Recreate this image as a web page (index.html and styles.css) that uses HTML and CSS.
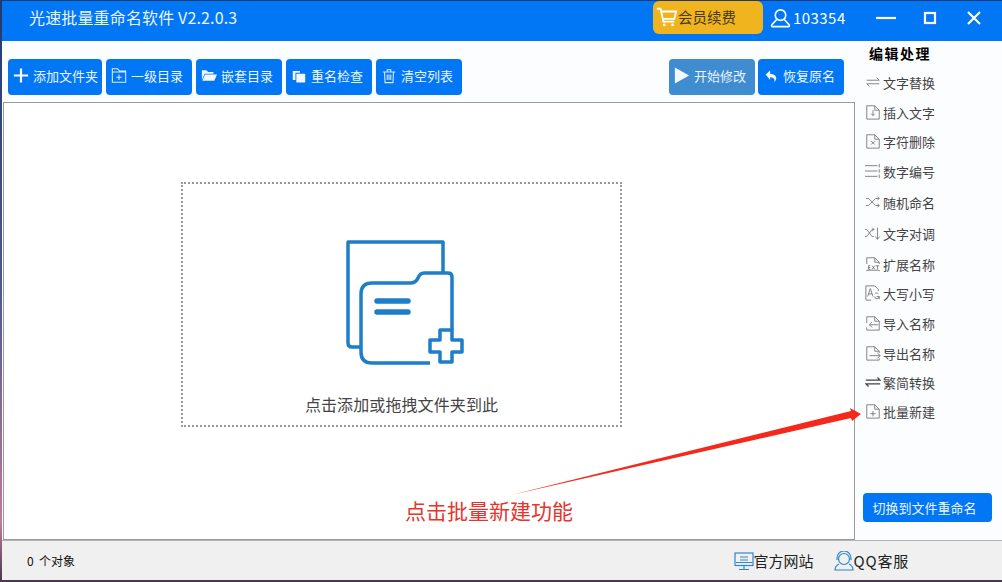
FILE: index.html
```html
<!DOCTYPE html>
<html lang="zh-CN">
  <head>
    <meta charset="UTF-8" />
    <meta name="viewport" content="width=device-width, initial-scale=1.0" />
    <title>光速批量重命名软件</title>
    <link rel="stylesheet" href="styles.css">
  </head>
  <body>
    <div class="window">
      <header class="titlebar">
        <div class="app-title">光速批量重命名软件 V2.2.0.3</div>
        <div class="vip">
          <svg class="vip-icon" viewBox="0 0 24 24"><path d="M1 3h4l3 14h12M5.500 6H22l-2 8H7.500"/><circle cx="9" cy="20.500" r="1.500"/><circle cx="18" cy="20.500" r="1.500"/></svg>
          <span>会员续费</span>
        </div>
        <div class="user">
          <svg class="user-icon" viewBox="0 0 22 20"><circle cx="11" cy="7" r="5.500"/><path d="M7 11.500 2 17q-1 2 1 2h16q2 0 1-2l-5-5.500"/></svg>
          <span>103354</span>
        </div>
        <div class="win-btns">
          <svg class="win-btn" viewBox="0 0 44 20"><path d="M12 10h20"/></svg>
          <svg class="win-btn" viewBox="0 0 44 20"><rect x="17" y="5" width="10" height="10"/></svg>
          <svg class="win-btn" viewBox="0 0 44 20"><path d="M16 4l12 12M28 4 16 16"/></svg>
        </div>
      </header>

      <div class="content">
        <main class="main">
          <div class="toolbar">
            <div class="tool tool-first">
              <svg class="tool-icon" viewBox="0 0 18 18"><path class="thick" d="M9 1v16M1 9h16"/></svg>
              添加文件夹
            </div>
            <div class="tool">
              <svg class="tool-icon" viewBox="0 0 18 18"><path class="thin" d="M1.500 16.500V1.500h6l2 2.500h7v12.500zM1.500 5h15M9 8v6M6 11h6"/></svg>
              一级目录
            </div>
            <div class="tool">
              <svg class="tool-icon" viewBox="0 0 18 18"><path class="solid" d="M1 3h5l2 2h6v2H4L1 14zM4.500 8H18l-3 7H1.500z"/></svg>
              嵌套目录
            </div>
            <div class="tool">
              <svg class="tool-icon" viewBox="0 0 18 18"><path class="solid" d="M2 4h8v2H5v8H2z"/><rect class="solid" x="6" y="7" width="10" height="10" rx="1"/></svg>
              重名检查
            </div>
            <div class="tool">
              <svg class="tool-icon" viewBox="0 0 18 18"><path class="thin" d="M2 5h14M7 5V2.500h4V5M4 5l.5 12h9L14 5M7 8v6M9 8v6M11 8v6"/></svg>
              清空列表
            </div>
            <div class="tool tool-start">
              <svg class="tool-icon" viewBox="0 0 18 18"><path class="solid" d="M1 0l16 9L1 18z"/></svg>
              开始修改
            </div>
            <div class="tool">
              <svg class="tool-icon" viewBox="0 0 18 18"><path class="solid" d="M3 8l5-4.500v3.500q7 .5 7 5.500 0 2-2.500 4 .5-1.500.5-2.500 0-2.500-5-3v3z"/></svg>
              恢复原名
            </div>
          </div>

          <div class="list-box">
            <div class="dropzone">
              <svg class="drop-icon" viewBox="0 0 145 140">
                <path d="M31 117H22q-4 0-4-4V12H113V43"/>
                <path d="M100 133H42q-11 0-11-11V64q0-11 11-11H80q6 0 8-5t6-5h24q4 0 4 4V100"/>
                <path class="bars" d="M47 71H78M47 82H78"/>
                <path d="M110 100h12v10h10v12h-10v10h-12v-10h-10v-12h10z"/>
              </svg>
              <p class="drop-text">点击添加或拖拽文件夹到此</p>
            </div>
            <p class="hint">点击批量新建功能</p>
          </div>
        </main>

        <aside class="side">
          <h2 class="side-title">编辑处理</h2>
          <ul class="side-list">
            <li class="side-item"><svg class="side-icon" viewBox="0 0 18 18"><path d="M2 7h14l-3-3M16 11H2l3 3"/></svg>文字替换</li>
            <li class="side-item"><svg class="side-icon" viewBox="0 0 18 18"><path d="M2 2h9l5 5v10H2zM11 2v5h5M9 7v6M7 11l2 2 2-2"/></svg>插入文字</li>
            <li class="side-item up"><svg class="side-icon" viewBox="0 0 18 18"><path d="M2 2h9l5 5v10H2zM11 2v5h5M7 9l4 4M11 9l-4 4"/></svg>字符删除</li>
            <li class="side-item"><svg class="side-icon" viewBox="0 0 18 18"><path d="M0 3h14M0 9h14M0 15h14M16 1v4M16 7v4M16 13v4"/></svg>数字编号</li>
            <li class="side-item down"><svg class="side-icon" viewBox="0 0 18 18"><path d="M1 5h3l8 8h4M1 13h3l8-8h4M14 3l2 2-2 2M14 11l2 2-2 2"/></svg>随机命名</li>
            <li class="side-item down"><svg class="side-icon" viewBox="0 0 18 18"><path d="M0 5h2l6 8h2M0 13h2l6-8h2M8 3l2 2-2 2M14 3v13M11.500 13l2.500 3 2.500-3"/></svg>文字对调</li>
            <li class="side-item down"><svg class="side-icon" viewBox="0 0 18 18"><path d="M2 9V2h9l5 5v2M11 2v5h5M2 17v-1h14v1M4 11h2M4 11v4h2M4 13h2M8 11l3 4M11 11l-3 4M12 11h4M14 11v4"/></svg>扩展名称</li>
            <li class="side-item up"><svg class="side-icon" viewBox="0 0 18 18"><path d="M1 1h10l4 4v2M1 1v16h6M3 13l3-9 3 9M4 10h4M15 10a2.500 2.500 0 0 0-4 0M11 13a2.500 2.500 0 1 0 5 0v3M16 13h-3"/></svg>大写小写</li>
            <li class="side-item"><svg class="side-icon" viewBox="0 0 18 18"><path d="M2 9V2h9l5 5v10H2v-3M11 2v5h5M15 11H5l3-3M5 11l3 3"/></svg>导入名称</li>
            <li class="side-item"><svg class="side-icon" viewBox="0 0 18 18"><path d="M16 9V7l-5-5H2v15h14v-2M11 2v5h5M5 12h12l-3-3M17 12l-3 3"/></svg>导出名称</li>
            <li class="side-item up"><svg class="side-icon dark" viewBox="0 0 18 18"><path d="M1 7h16l-3-3M17 11H1l3 3"/></svg>繁简转换</li>
            <li class="side-item up"><svg class="side-icon" viewBox="0 0 18 18"><path d="M2 17V2h9l5 5v10zM11 2v5h5M9 9v6M6 12h6"/></svg>批量新建</li>
          </ul>
          <div class="switch-btn">切换到文件重命名</div>
        </aside>
      </div>

      <footer class="statusbar">
        <span class="count">0  个对象</span>
        <div class="links">
          <span class="link">
            <svg class="link-icon" viewBox="0 0 20 20"><rect x="1" y="2" width="18" height="12.500"/><path d="M6 6h8M6 9h8M2 11.500h16M10 15v3M5 18.500h10"/></svg>
            官方网站
          </span>
          <span class="link link-qq">
            <svg class="link-icon" viewBox="0 0 20 20"><circle cx="10" cy="8" r="5.500"/><path d="M3 9V7a7 7 0 0 1 14 0v2M5 13q-4 2-4 6h18q0-4-4-6"/></svg>
            QQ客服
          </span>
        </div>
      </footer>
    </div>

    <!-- 红色箭头,压在列表和侧栏上面 -->
    <svg class="arrow" viewBox="0 0 1002 582"><polygon points="511,495 851,411 850,408 861,414 852,421 851,418"/></svg>
  </body>
</html>
```

FILE: styles.css
```css
* {
  padding: 0;
  margin: 0;
  box-sizing: border-box;
  font-family: "Noto Sans CJK SC", "Noto Sans", sans-serif;
}

html,
body {
  width: 1002px;
  height: 582px;
  overflow: hidden;
}

body {
  position: relative;
  background: linear-gradient(#1f3a70 0%, #4a5a8e 50%, #c07a9a 90%, #4a3550 100%);
}

.window {
  display: flex;
  flex-direction: column;
  height: 579px;
  margin: 1px 0 0 2px;
  background-color: #fcfdff;
}

/* barra de titulo */
.titlebar {
  display: flex;
  align-items: center;
  height: 40px;
  flex-shrink: 0;
  background-color: #0277f6;
  color: white;
}

.app-title {
  flex-shrink: 0;
  width: 651px;
  padding: 0 0 9px 27px;
  font-size: 16px;
  line-height: 24px;
  letter-spacing: 0.150px;
  color: #eaf4ff;
}

.vip {
  display: flex;
  align-items: center;
  flex-shrink: 0;
  width: 110px;
  height: 33px;
  margin-top: -7px;
  padding-bottom: 2px;
  border-radius: 6px;
  background-color: #f0b41e;
  color: #4a3a10;
  font-size: 14.500px;
}

.vip-icon {
  width: 22px;
  height: 24px;
  margin-left: 3px;
  fill: none;
  stroke: white;
  stroke-width: 2;
}

.vip-icon circle {
  fill: white;
  stroke: none;
}

.user {
  display: flex;
  align-items: center;
  flex-shrink: 0;
  width: 94px;
  margin: -7px 0 0 7px;
  font-size: 15px;
  letter-spacing: 0.450px;
}

.user-icon {
  width: 21px;
  height: 20px;
  margin-right: 2px;
  fill: none;
  stroke: white;
  stroke-width: 1.700;
}

.win-btns {
  display: flex;
  flex-shrink: 0;
  margin-top: -6px;
}

.win-btn {
  width: 44px;
  height: 20px;
  fill: none;
  stroke: white;
  stroke-width: 2.200;
}

.content {
  display: flex;
  flex: 1;
  min-height: 0;
}

/* area principal */
.main {
  display: flex;
  flex-direction: column;
  width: 853px;
}

.toolbar {
  display: flex;
  align-items: flex-start;
  gap: 4px;
  height: 61px;
  padding: 18px 0 0 6px;
}

.tool {
  display: flex;
  align-items: center;
  gap: 4px;
  width: 86px;
  height: 36px;
  padding: 0 0 3px 5px;
  border-radius: 4px;
  background-color: #0277f6;
  color: #eaf4ff;
  font-size: 13px;
  white-space: nowrap;
}

.tool-first {
  width: 94px;
}

.tool-start {
  margin-left: 203px;
  margin-right: -1px;
  background-color: #3f8dd0;
}

.tool-icon {
  width: 16px;
  height: 17px;
  flex-shrink: 0;
}

.thick {
  fill: none;
  stroke: white;
  stroke-width: 2.500;
}

.thin {
  fill: none;
  stroke: #dbeaff;
  stroke-width: 1.200;
}

.solid {
  fill: #f2f8ff;
}

.list-box {
  position: relative;
  flex: 1;
  margin-left: 1px;
  border: 1px solid #9a9a9a;
  background-color: white;
}

.dropzone {
  position: absolute;
  left: 177px;
  top: 79px;
  display: flex;
  flex-direction: column;
  align-items: center;
  width: 441px;
  height: 245px;
  padding-top: 46px;
  border: 2px dotted #999;
}

.drop-icon {
  width: 145px;
  height: 140px;
  margin-left: 1px;
  fill: none;
  stroke: #1e7ec8;
  stroke-width: 3.500;
  stroke-linejoin: round;
}

.bars {
  stroke-width: 5.500;
  stroke-linecap: round;
}

.drop-text {
  margin-top: 22px;
  font-size: 16px;
  line-height: 24px;
  letter-spacing: 0.100px;
  color: #444;
}

.hint {
  position: absolute;
  left: 401px;
  top: 391px;
  font-size: 21px;
  line-height: 32px;
  color: #e5352d;
  white-space: nowrap;
}

/* barra lateral */
.side {
  display: flex;
  flex-direction: column;
  flex: 1;
  padding-top: 2px;
}

.side-title {
  padding-left: 14px;
  font-size: 14px;
  line-height: 20px;
  font-weight: 700;
  letter-spacing: 1.500px;
  color: black;
}

.side-list {
  list-style: none;
  margin-top: 4px;
}

.side-item {
  display: flex;
  align-items: center;
  gap: 2px;
  height: 30px;
  padding-left: 10px;
  font-size: 13px;
  color: #444;
}

/* as linhas do original nao sao regulares */
.side-item.up {
  margin-top: -1px;
}

.side-item.down {
  margin-top: 1px;
}

.side-icon {
  width: 16px;
  height: 16px;
  flex-shrink: 0;
  fill: none;
  stroke: #777;
  stroke-width: 1;
}

.side-icon.dark {
  stroke: #444;
  stroke-width: 1.400;
}

.switch-btn {
  display: flex;
  align-items: center;
  justify-content: center;
  width: 129px;
  height: 29px;
  margin: 67px 0 0 8px;
  padding-right: 6px;
  border-radius: 4px;
  background-color: #0277f6;
  color: #eaf4ff;
  font-size: 13px;
}

/* barra de status */
.statusbar {
  display: flex;
  align-items: center;
  justify-content: space-between;
  height: 40px;
  flex-shrink: 0;
  border-top: 1px solid #b4b4b4;
  background-color: #f0f0f0;
}

.count {
  padding-left: 25px;
  font-size: 12px;
  color: #111;
  white-space: pre;
}

.links {
  display: flex;
  gap: 20px;
  padding-right: 93px;
}

.link {
  display: flex;
  align-items: center;
  gap: 0;
  font-size: 15px;
  color: #222;
}

.link-qq {
  letter-spacing: 0.800px;
}

.link-icon {
  width: 20px;
  height: 20px;
  fill: none;
  stroke: #2f86c8;
  stroke-width: 1.200;
}

.arrow {
  position: absolute;
  left: 0;
  top: 0;
  width: 1002px;
  height: 582px;
  pointer-events: none;
  fill: #f5281c;
}
```
